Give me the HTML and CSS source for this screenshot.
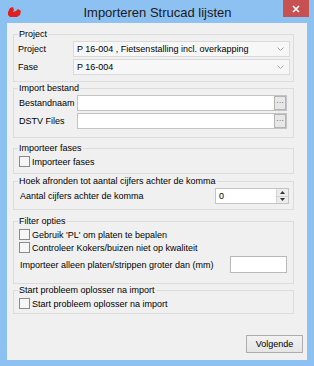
FILE: index.html
```html
<!DOCTYPE html>
<html lang="nl">
<head>
    <meta charset="UTF-8">
    <meta name="viewport" content="width=device-width, initial-scale=1.0">
    <title>Importeren Strucad lijsten</title>
    <link rel="stylesheet" href="styles.css">
</head>
<body>
    <div class="window">
        <!-- Title bar -->
        <div class="titlebar">
            <svg class="app-icon" width="14" height="11" viewBox="0 0 14 11">
                <path d="M0 5 L2 1 L5 0 L6 3 L5 5 L8 4 L10 2 L13 4 L12 8 L9 10 L2 10 L0 8 Z" fill="#e02020"/>
            </svg>
            <div class="title">Importeren Strucad lijsten</div>
            <div class="close">
                <svg width="8" height="8" viewBox="0 0 8 8">
                    <path d="M1 1 L7 7 M7 1 L1 7" stroke="#fff" stroke-width="1.6"/>
                </svg>
            </div>
        </div>

        <div class="client">
            <fieldset class="group group-project">
                <legend>Project</legend>
                <div class="row">
                    <span class="lbl lbl-project">Project</span>
                    <div class="combo">
                        <span>P 16-004 , Fietsenstalling incl. overkapping</span>
                        <svg class="chevron" width="7" height="4" viewBox="0 0 7 4"><path d="M0.5 0.5 L3.5 3.5 L6.5 0.5" stroke="#a8a8a8" fill="none"/></svg>
                    </div>
                </div>
                <div class="row">
                    <span class="lbl lbl-project">Fase</span>
                    <div class="combo">
                        <span>P 16-004</span>
                        <svg class="chevron" width="7" height="4" viewBox="0 0 7 4"><path d="M0.5 0.5 L3.5 3.5 L6.5 0.5" stroke="#a8a8a8" fill="none"/></svg>
                    </div>
                </div>
            </fieldset>

            <fieldset class="group group-import">
                <legend>Import bestand</legend>
                <div class="row">
                    <span class="lbl lbl-file">Bestandnaam</span>
                    <div class="textbox file-box"><span class="browse">···</span></div>
                </div>
                <div class="row">
                    <span class="lbl lbl-file">DSTV Files</span>
                    <div class="textbox file-box"><span class="browse">···</span></div>
                </div>
            </fieldset>

            <fieldset class="group group-fases">
                <legend>Importeer fases</legend>
                <label class="check"><span class="box"></span>Importeer fases</label>
            </fieldset>

            <fieldset class="group group-hoek">
                <legend>Hoek afronden tot aantal cijfers achter de komma</legend>
                <div class="row">
                    <span class="lbl lbl-wide">Aantal cijfers achter de komma</span>
                    <div class="spin">
                        <span class="spin-value">0</span>
                        <span class="spin-buttons">
                            <span class="spin-btn"><svg width="5" height="3" viewBox="0 0 5 3"><path d="M0 3 L2.5 0 L5 3 Z" fill="#333"/></svg></span>
                            <span class="spin-btn"><svg width="5" height="3" viewBox="0 0 5 3"><path d="M0 0 L2.5 3 L5 0 Z" fill="#333"/></svg></span>
                        </span>
                    </div>
                </div>
            </fieldset>

            <fieldset class="group group-filter">
                <legend>Filter opties</legend>
                <label class="check"><span class="box"></span>Gebruik 'PL' om platen te bepalen</label>
                <label class="check"><span class="box"></span>Controleer Kokers/buizen niet op kwaliteit</label>
                <div class="row row-size">
                    <span class="lbl lbl-wide">Importeer alleen platen/strippen groter dan (mm)</span>
                    <div class="textbox size-box"></div>
                </div>
            </fieldset>

            <fieldset class="group group-start">
                <legend>Start probleem oplosser na import</legend>
                <label class="check"><span class="box"></span>Start probleem oplosser na import</label>
            </fieldset>

            <div class="actions">
                <button class="btn" type="button">Volgende</button>
            </div>
        </div>
    </div>
</body>
</html>
```

FILE: styles.css
```css
body {
    margin: 0;
    padding: 0;
    background-color: #8dc1f2;
    font-family: "Liberation Sans", Arial, sans-serif;
    font-size: 9px;
    color: #000;
}

.window {
    width: 314px;
    height: 366px;
    box-sizing: border-box;
    display: flex;
    flex-direction: column;
    background-color: #8dc1f2;
}

/* Title bar */
.titlebar {
    height: 23px;
    display: flex;
    align-items: flex-start;
    flex-shrink: 0;
}

.app-icon {
    margin: 7px 0 0 8px;
    flex-shrink: 0;
}

.title {
    flex: 1;
    text-align: center;
    font-size: 13px;
    line-height: 25px;
    padding-left: 10px;
    color: #1a1a1a;
}

.close {
    width: 26px;
    height: 17px;
    margin-right: 5px;
    background-color: #c75050;
    display: flex;
    align-items: center;
    justify-content: center;
    flex-shrink: 0;
}

/* Client area */
.client {
    flex: 1;
    margin: 0 7px 6px 7px;
    padding: 5px 0 7px 6px;
    background-color: #f0f0f0;
    display: flex;
    flex-direction: column;
}

.group {
    width: 281px;
    box-sizing: border-box;
    margin: 0;
    padding: 0 3px 0 4px;
    border: 1px solid #dcdcdc;
    min-width: 0;
}

.group legend {
    padding: 0 1px;
    line-height: 13px;
}

.group-project { padding-bottom: 6px; }
.group-import { padding-bottom: 8px; }
.group-fases { margin-top: 4px; padding-bottom: 5px; }
.group-hoek { margin-top: 1px; padding-bottom: 5px; }
.group-filter { margin-top: 5px; padding-bottom: 10px; }
.group-start { padding-bottom: 3px; }

.row {
    display: flex;
    align-items: center;
}

.group-project .row {
    height: 16px;
}

.group-project .row + .row,
.group-import .row + .row {
    margin-top: 2px;
}

.lbl {
    flex-shrink: 0;
    white-space: nowrap;
}

.lbl-project {
    width: 55px;
}

.lbl-file {
    width: 58px;
    padding-left: 1px;
}

.lbl-wide {
    flex: 1;
    padding-left: 2px;
}

/* Combo boxes */
.combo {
    flex: 1;
    height: 16px;
    box-sizing: border-box;
    border: 1px solid #dadada;
    background-color: #f7f7f7;
    display: flex;
    align-items: center;
    padding: 0 5px 0 3px;
}

.combo span {
    flex: 1;
    white-space: nowrap;
}

.chevron {
    flex-shrink: 0;
}

/* Text boxes */
.textbox {
    height: 16px;
    box-sizing: border-box;
    border: 1px solid #c4c4c4;
    background-color: #fff;
    display: flex;
    justify-content: flex-end;
}

.file-box {
    flex: 1;
    margin-right: 3px;
}

.browse {
    width: 12px;
    height: 14px;
    box-sizing: border-box;
    border: 1px solid #b4b4b4;
    background-color: #e8e8e8;
    font-size: 8px;
    line-height: 11px;
    text-align: center;
    color: #444;
}

.row-size {
    height: 17px;
    margin-top: 2px;
}

.size-box {
    width: 57px;
    height: 17px;
    margin-right: 3px;
    border-color: #b9b9b9;
}

/* Spin box */
.spin {
    width: 74px;
    height: 16px;
    box-sizing: border-box;
    border: 1px solid #c4c4c4;
    background-color: #fff;
    display: flex;
    margin-right: 1px;
}

.spin-value {
    flex: 1;
    padding-left: 3px;
    line-height: 14px;
}

.spin-buttons {
    width: 11px;
    display: flex;
    flex-direction: column;
    border-left: 1px solid #d4d4d4;
}

.spin-btn {
    flex: 1;
    display: flex;
    align-items: center;
    justify-content: center;
    background-color: #ececec;
}

.spin-btn + .spin-btn {
    border-top: 1px solid #d4d4d4;
}

/* Check boxes */
.check {
    display: flex;
    align-items: center;
    height: 13px;
    white-space: nowrap;
}

.box {
    width: 11px;
    height: 11px;
    box-sizing: border-box;
    border: 1px solid #8a8a8a;
    background-color: #f6f6f6;
    margin: 0 2px 0 1px;
    flex-shrink: 0;
}

/* Bottom button */
.actions {
    margin-top: auto;
    display: flex;
    justify-content: flex-end;
    padding-right: 4px;
}

.btn {
    width: 57px;
    height: 18px;
    padding: 0;
    border: 1px solid #adadad;
    background: linear-gradient(#f2f2f2, #e5e5e5);
    font-family: inherit;
    font-size: 9px;
    color: #000;
}
```
